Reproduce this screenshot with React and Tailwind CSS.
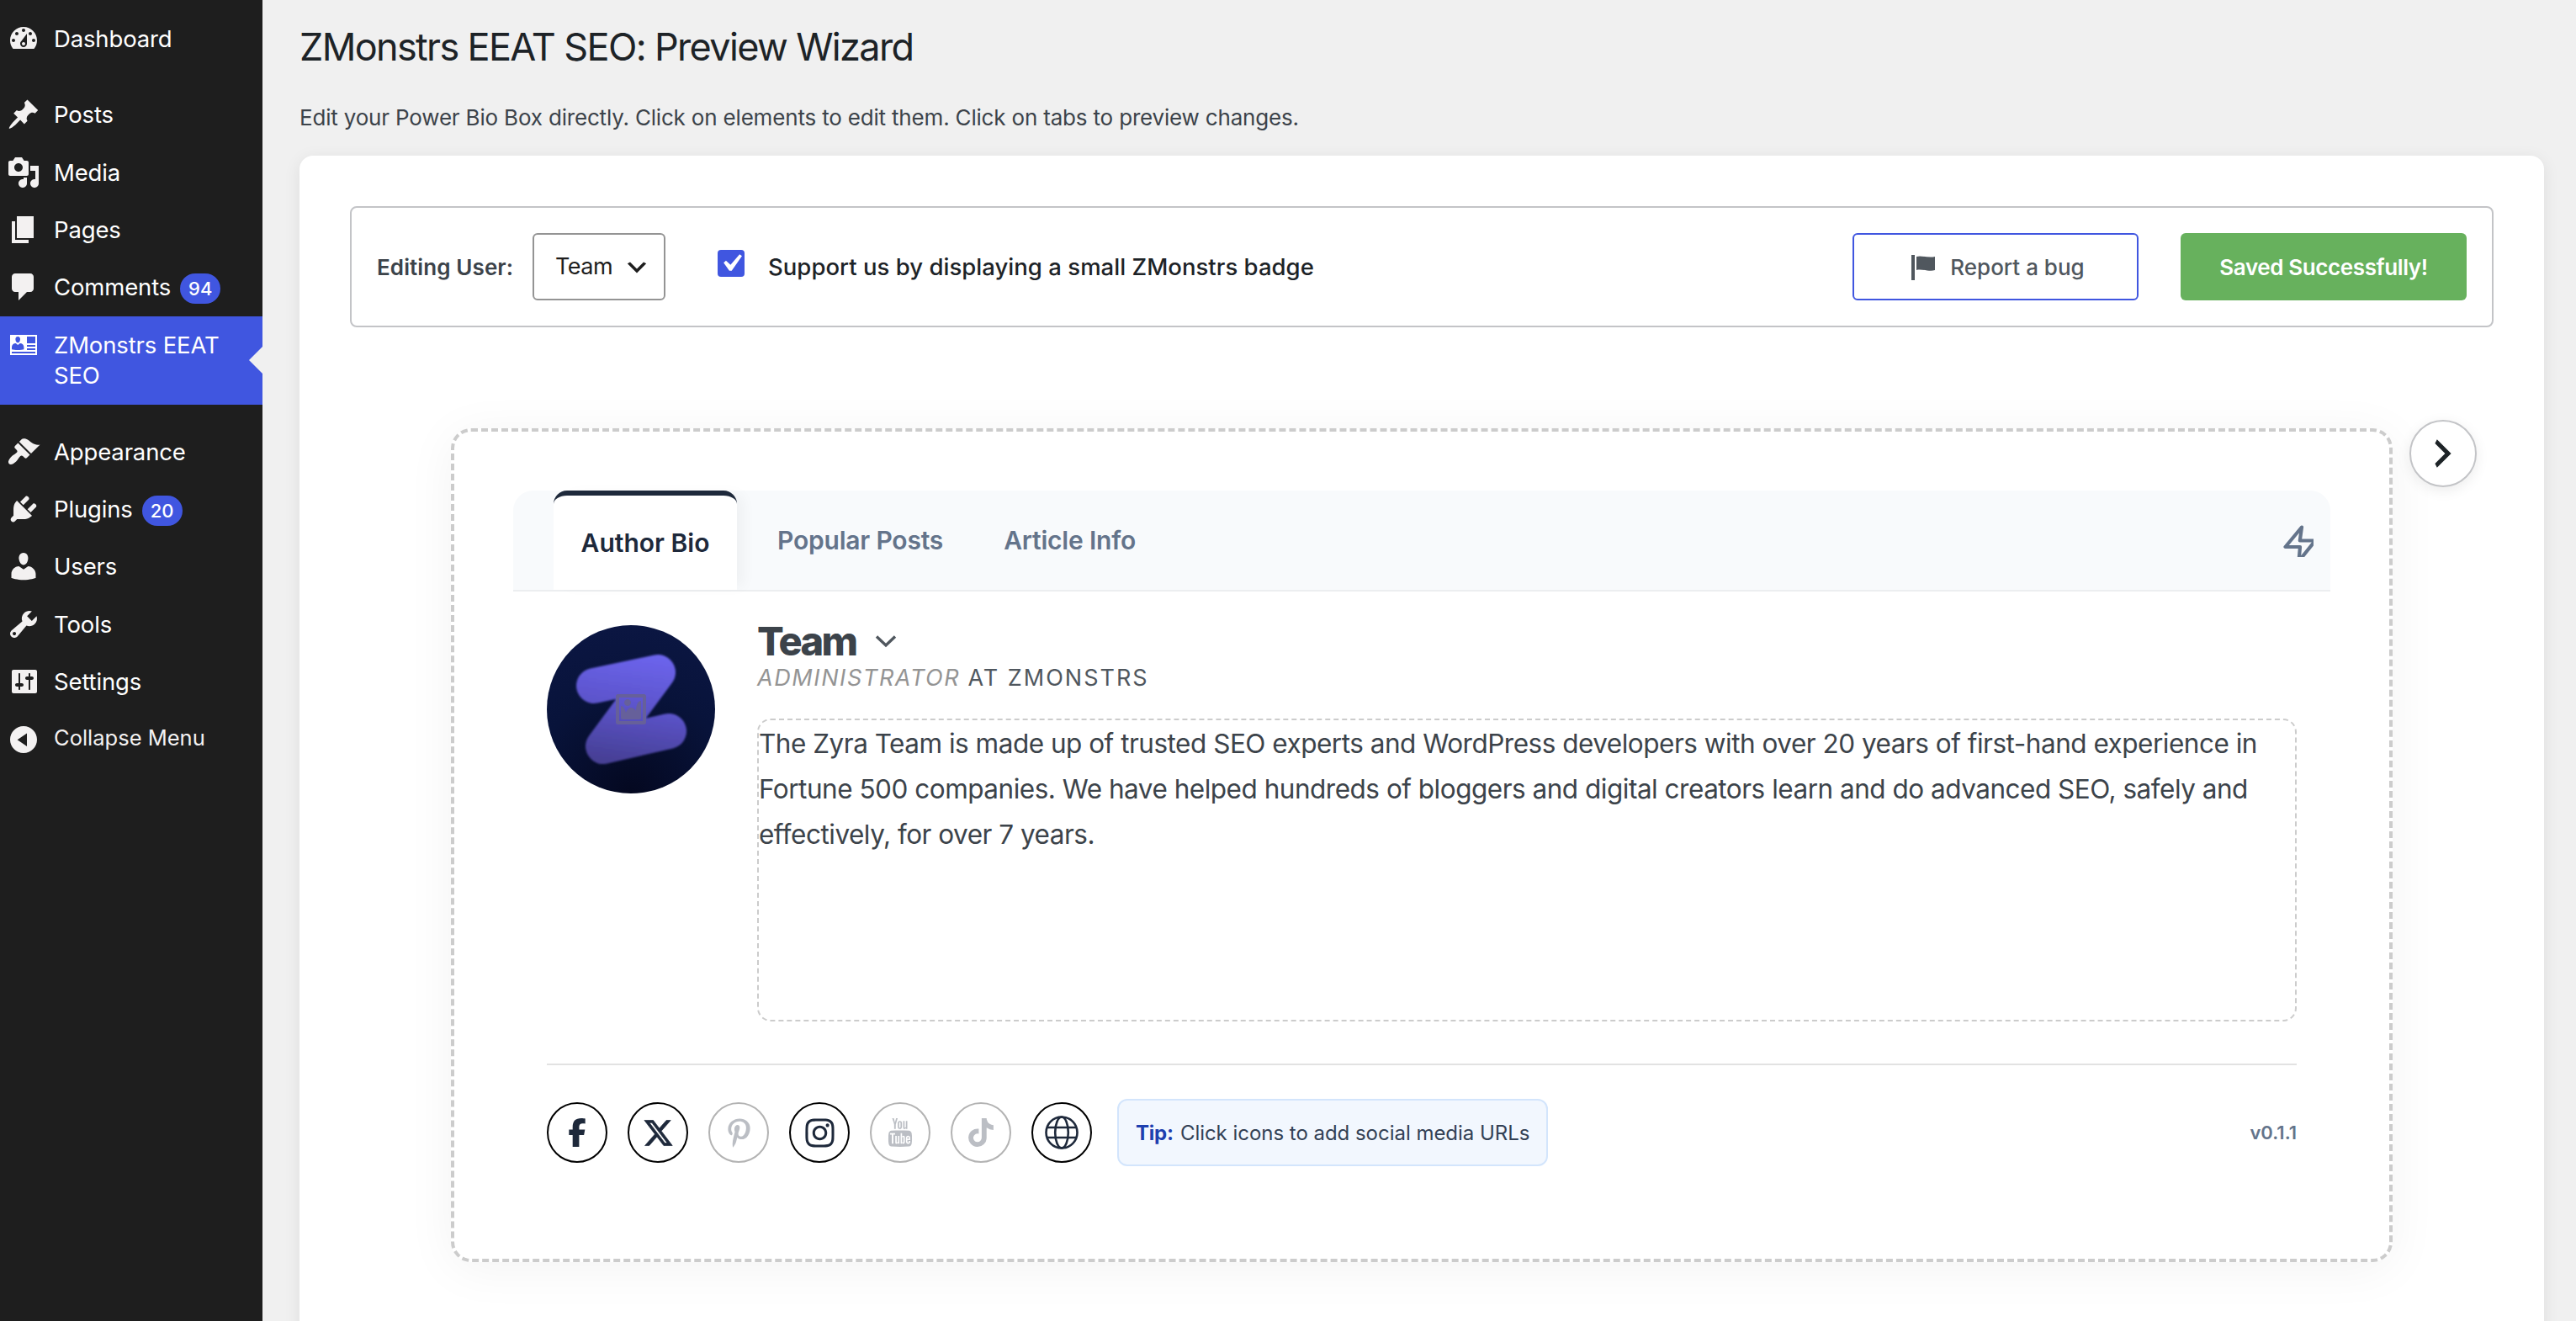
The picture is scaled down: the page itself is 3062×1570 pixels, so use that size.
import { FaFacebookF, FaXTwitter, FaPinterestP, FaInstagram, FaTiktok } from "react-icons/fa6";
import { TfiYoutube } from "react-icons/tfi";

const dashicons = {
    dashboard: "M3.76 16h12.48c1.1-1.37 1.76-3.11 1.76-5 0-4.42-3.58-8-8-8s-8 3.58-8 8c0 1.89.66 3.63 1.76 5zM10 4c.55 0 1 .45 1 1s-.45 1-1 1-1-.45-1-1 .45-1 1-1zM6 6c.55 0 1 .45 1 1s-.45 1-1 1-1-.45-1-1 .45-1 1-1zm8 0c.55 0 1 .45 1 1s-.45 1-1 1-1-.45-1-1 .45-1 1-1zm-5.37 5.55L12 7v6c0 1.1-.9 2-2 2s-2-.9-2-2c0-.57.24-1.08.63-1.45zM4 10c.55 0 1 .45 1 1s-.45 1-1 1-1-.45-1-1 .45-1 1-1zm12 0c.55 0 1 .45 1 1s-.45 1-1 1-1-.45-1-1 .45-1 1-1zm-5 3c0-.55-.45-1-1-1s-1 .45-1 1 .45 1 1 1 1-.45 1-1z",
    post: "M10.44 3.02l1.82-1.82 6.36 6.35-1.83 1.82c-1.05-.68-2.48-.57-3.41.36l-.75.75c-.92.93-1.04 2.35-.35 3.41l-1.83 1.82-2.41-2.41-2.8 2.79c-.42.42-3.38 2.71-3.8 2.29s1.86-3.39 2.28-3.81l2.79-2.79L4.1 9.36l1.83-1.82c1.05.69 2.48.57 3.4-.36l.75-.75c.93-.92 1.05-2.35.36-3.41z",
    media: "M13 11V4c0-.55-.45-1-1-1h-1.67L9 1H5L3.67 3H2c-.55 0-1 .45-1 1v7c0 .55.45 1 1 1h10c.55 0 1-.45 1-1zM7 4.5c1.38 0 2.5 1.12 2.5 2.5S8.38 9.5 7 9.5 4.5 8.38 4.5 7 5.62 4.5 7 4.5zM14 6h5v10.5c0 1.38-1.12 2.5-2.5 2.5S14 17.88 14 16.5s1.12-2.5 2.5-2.5c.17 0 .34.02.5.05V9h-3V6zm-4 8.05V13h2v3.5c0 1.38-1.12 2.5-2.5 2.5S7 17.88 7 16.5 8.12 14 9.5 14c.17 0 .34.02.5.05z",
    page: "M6 15V2h10v13H6zm-1 1h8v2H3V5h2v11z",
    comments: "M5 2h9c1.1 0 2 .9 2 2v7c0 1.1-.9 2-2 2h-2l-5 5v-5H5c-1.1 0-2-.9-2-2V4c0-1.1.9-2 2-2z",
    id: "M2 4h16v12H2V4zm10 1v4h5V5h-5zm0 5v1h5v-1h-5zm0 2v1h5v-1h-5zM3 14v1h14v-1H3zM6.6 5C5.6 5 5.1 5.8 5.2 6.8c.1 1 .6 1.9 1.4 1.9s1.3-.9 1.4-1.9C8.1 5.8 7.6 5 6.6 5zM5.4 9C4 9 3 10 3 11.2V12.600c1.2.5 6 .5 7.200 0V11.200C10.200 10 9.200 9 7.900 9L6.600 10z",
    appearance: "M14.48 11.06L7.41 3.99l1.5-1.5c.5-.56 2.3-.47 3.51.32 1.21.8 1.43 1.28 2.91 2.1 1.18.64 2.45 1.26 4.45.85zm-.71.71L6.7 4.7 4.93 6.47c-.39.39-.39 1.02 0 1.41l1.06 1.06c.39.39.39 1.03 0 1.42-.6.6-1.43 1.11-2.21 1.69-.35.26-.7.53-1.01.84C1.43 14.23.4 16.08 1.4 17.07c.99 1 2.84-.03 4.18-1.36.31-.31.58-.66.85-1.02.57-.78 1.08-1.61 1.69-2.21.39-.39 1.02-.39 1.41 0l1.06 1.06c.39.39 1.02.39 1.41 0z",
    plugins: "M13.11 4.36L9.87 7.6 8 5.73l3.24-3.24c.35-.34 1.05-.2 1.56.32.52.51.66 1.21.31 1.55zm-8 1.77l.91-1.12 9.01 9.01-1.19.84c-.71.71-2.63 1.16-3.82 1.16H6.14L4.9 17.26c-.59.59-1.54.59-2.12 0-.59-.58-.59-1.53 0-2.12l1.24-1.24v-3.88c0-1.13.4-3.19 1.09-3.89zm7.26 3.97l3.24-3.24c.34-.35 1.04-.21 1.55.31.52.51.66 1.21.31 1.55l-3.24 3.25z",
    users: "M10 9.25c-2.27 0-2.73-3.44-2.73-3.44C7 4.02 7.82 2 9.97 2c2.16 0 2.98 2.02 2.71 3.81 0 0-.41 3.44-2.68 3.44zm0 2.57L12.72 10c2.39 0 4.52 2.33 4.52 4.53v2.49s-3.65 1.13-7.24 1.13c-3.65 0-7.24-1.13-7.24-1.13v-2.49c0-2.25 1.94-4.48 4.47-4.48z",
    tools: "M16.68 9.77c-1.34 1.34-3.3 1.67-4.95.99l-5.41 6.52c-.99.99-2.59.99-3.58 0s-.99-2.59 0-3.57l6.52-5.42c-.68-1.65-.35-3.61.99-4.95 1.28-1.28 3.12-1.62 4.72-1.06l-2.89 2.89 2.82 2.82 2.86-2.87c.53 1.58.18 3.39-1.08 4.65zM3.81 16.21c.4.39 1.04.39 1.43 0 .4-.4.4-1.04 0-1.43-.39-.4-1.03-.4-1.43 0-.39.39-.39 1.03 0 1.43z",
    settings: "M18 16V4c0-.55-.45-1-1-1H4c-.55 0-1 .45-1 1v12c0 .55.45 1 1 1h13c.55 0 1-.45 1-1zM8 11h1c.55 0 1 .45 1 1s-.45 1-1 1H8v1.5c0 .28-.22.5-.5.5s-.5-.22-.5-.5V13H6c-.55 0-1-.45-1-1s.45-1 1-1h1V5.5c0-.28.22-.5.5-.5s.5.22.5.5V11zm5-2h-1c-.55 0-1-.45-1-1s.45-1 1-1h1V5.5c0-.28.22-.5.5-.5s.5.22.5.5V7h1c.55 0 1 .45 1 1s-.45 1-1 1h-1v5.5c0 .28-.22.5-.5.5s-.5-.22-.5-.5V9z",
    collapse: "M10 2c4.42 0 8 3.58 8 8s-3.58 8-8 8-8-3.58-8-8 3.58-8 8-8zm2 12V6.200l-5.700 3.900z",
    flag: "M5 18V3H3v15h2zm1-6V4c3-1 7 1 11 0v8c-3 1.27-8-1-11 0z",
    image: "M2.25 1h15.5c.69 0 1.25.56 1.25 1.25v15.5c0 .69-.56 1.25-1.25 1.25H2.25C1.56 19 1 18.44 1 17.75V2.25C1 1.56 1.56 1 2.25 1zM17 17V3H3v14h14zM10 6c0-1.1-.9-2-2-2s-2 .9-2 2 .9 2 2 2 2-.9 2-2zm3 5s0-6 3-6v10c0 .55-.45 1-1 1H5c-.55 0-1-.45-1-1V8c2 0 3 4 3 4s1-3 3-3 3 2 3 2z",
    arrowRight: "M6 15l5-5-5-5 1-2 7 7-7 7z",
    arrowDown: "M5 6l5 5 5-5 2 1-7 7-7-7z",
    check: "M14.83 4.89l1.34.94-5.81 8.38H9.02L5.78 9.67l1.34-1.25 2.57 2.4z",
};

const menu = [
    { icon: "dashboard", label: "Dashboard", gap: true },
    { icon: "post", label: "Posts" },
    { icon: "media", label: "Media" },
    { icon: "page", label: "Pages" },
    { icon: "comments", label: "Comments", count: 94 },
    { icon: "id", label: "ZMonstrs EEAT SEO", active: true, gap: true },
    { icon: "appearance", label: "Appearance" },
    { icon: "plugins", label: "Plugins", count: 20 },
    { icon: "users", label: "Users" },
    { icon: "tools", label: "Tools" },
    { icon: "settings", label: "Settings" },
];

const socials = [
    { name: "Facebook", icon: <FaFacebookF size={34} />, on: true },
    { name: "X", icon: <FaXTwitter size={37} stroke="currentColor" strokeWidth="10" />, on: true },
    { name: "Pinterest", icon: <FaPinterestP size={35} /> },
    { name: "Instagram", icon: <FaInstagram size={39} />, on: true },
    { name: "YouTube", icon: <TfiYoutube size={34} /> },
    { name: "TikTok", icon: <FaTiktok size={34} /> },
    { name: "Website", icon: <Globe />, on: true },
];

function Dashicon({ name, className = "size-10" }) {
    return (
        <svg viewBox="0 0 20 20" className={`shrink-0 ${className}`} fill="currentColor" fillRule="evenodd">
            <path d={dashicons[name]} />
        </svg>
    );
}

function Globe() {
    return (
        <svg width="40" height="40" viewBox="0 0 40 40" fill="none" stroke="currentColor" strokeWidth="2.600">
            <circle cx="20" cy="20" r="18.500" />
            <ellipse cx="20" cy="20" rx="7.800" ry="18.500" />
            <path d="M2.500 14H37.500M2.500 26H37.500" />
        </svg>
    );
}

function MenuItem({ item }) {
    return (
        <li className={item.gap ? "mb-[22px]" : ""}>
            <a className={`relative flex pl-2 pt-[14px] ${item.active ? "h-[104.8px] bg-[#4056e0]" : "h-[68.4px]"}`}>
                <Dashicon name={item.icon} className={item.active ? "size-10 text-white" : "size-10 text-[#f3f1f1]"} />
                <div className="ml-4 mt-[2px] flex w-[220px] items-start text-[27.5px] leading-[36.4px] tracking-[-0.15px] text-white">
                    {item.label}
                    {item.count && (
                        <span className="ml-[11px] mt-[2px] flex h-9 items-center rounded-full bg-[#4056e0] px-[10px] text-[22px] font-medium tracking-normal">
                            {item.count}
                        </span>
                    )}
                </div>
                {item.active && (
                    <span className="absolute right-0 top-9 border-y-[16px] border-r-[16px] border-y-transparent border-r-[#f0f0f0]"></span>
                )}
            </a>
        </li>
    );
}

function Sidebar() {
    return (
        <nav className="w-[312px] shrink-0 bg-[#1e1e1e] pt-[11.8px]">
            <ul>
                {menu.map((item) => <MenuItem key={item.label} item={item} />)}
            </ul>
            <button className="flex h-[68px] items-center gap-4 pl-2 text-[#f3f1f1]">
                <Dashicon name="collapse" />
                <span className="-mt-[3px] text-[25.5px]">Collapse Menu</span>
            </button>
        </nav>
    );
}

function Toolbar() {
    return (
        <div className="flex h-36 items-center rounded-lg border-2 border-[#c3c4c7] px-[30px]">
            <span className="w-[185px] pt-[1px] text-[26px] font-semibold tracking-[0.1px] text-[#3c434a]">Editing User:</span>
            <button className="flex h-20 w-[158px] items-center justify-between rounded-md border-2 border-[#949494] pl-[25px] pr-4 pt-[1px] text-[27px] tracking-[-0.5px] text-[#1e1e1e]">
                Team
                <Dashicon name="arrowDown" className="size-8" />
            </button>
            <label className="ml-[62px] flex items-center">
                <span className="-mt-2 flex size-8 items-center justify-center rounded-sm bg-[#4056e0] text-white">
                    <Dashicon name="check" className="size-[42px]" />
                </span>
                <span className="ml-7 pt-[1px] text-[27.5px] font-medium tracking-[0.03px] text-[#1d2327]">
                    Support us by displaying a small ZMonstrs badge
                </span>
            </label>
            <button className="ml-auto flex h-20 w-[340px] items-center justify-center rounded-md border-2 border-[#4056e0] text-[26px] font-medium text-[#50575e]">
                <Dashicon name="flag" className="mr-3 size-10" />
                Report a bug
            </button>
            <button className="ml-[50px] h-20 w-[340px] rounded-md bg-[#67b15d] text-[26px] font-semibold tracking-[-0.4px] text-white">
                Saved Successfully!
            </button>
        </div>
    );
}

function Tabs() {
    return (
        <div className="flex h-[120px] rounded-t-3xl border-b-2 border-[#eceef0] bg-[#f8fafc] pl-12 pr-5 text-[30px] font-semibold text-[#64748b]">
            <button className="w-[218px] rounded-t-[16px] border-t-[6px] border-[#1e293b] bg-white text-[#1e293b] shadow-[12px_0_16px_-4px_rgba(0,0,0,0.04)]">
                Author Bio
            </button>
            <button className="ml-[48px] tracking-[-0.2px]">Popular Posts</button>
            <button className="ml-[72px] tracking-[-0.2px]">Article Info</button>
            <svg className="ml-auto mt-[39px]" width="40" height="40" viewBox="0 0 40 40" fill="none" stroke="currentColor" strokeWidth="4.200" strokeLinejoin="round">
                <path d="M26 4.500L6.500 28H24L22.500 45L42 20.500H23.800z" />
            </svg>
        </div>
    );
}

function Avatar() {
    return (
        <svg viewBox="0 0 200 200" className="size-[200px] shrink-0 rounded-full">
            <defs>
                <radialGradient id="night" cx="0.5" cy="1" r="1">
                    <stop offset="0" stopColor="#040820" />
                    <stop offset="0.6" stopColor="#08133a" />
                    <stop offset="1" stopColor="#0b1642" />
                </radialGradient>
                <linearGradient id="zed" gradientUnits="userSpaceOnUse" x1="110" y1="34" x2="90" y2="165">
                    <stop offset="0" stopColor="#6c64ec" />
                    <stop offset="0.45" stopColor="#5d55cd" />
                    <stop offset="1" stopColor="#463f94" />
                </linearGradient>
                <filter id="soft" filterUnits="userSpaceOnUse" x="0" y="0" width="200" height="200">
                    <feGaussianBlur stdDeviation="0.8" />
                </filter>
            </defs>
            <rect width="200" height="200" fill="url(#night)" />
            <path d="M56 72L132 56L67 144L145 126" fill="none" stroke="url(#zed)" strokeWidth="42" strokeLinecap="round" strokeLinejoin="round" filter="url(#soft)" />
            <g transform="translate(80 80) scale(2)" fill="#66609a" fillRule="evenodd">
                <path d={dashicons.image} />
            </g>
        </svg>
    );
}

function AuthorBio() {
    return (
        <div className="px-10 pt-10">
            <div className="flex gap-[50px]">
                <Avatar />
                <div className="grow">
                    <h2 className="flex h-[38px] items-center text-[47px] font-extrabold tracking-[-2.7px] text-[#3c434a]">
                        Team
                        <svg width="26" height="16" viewBox="0 0 26 16" className="ml-[23px]" fill="none" stroke="#50575e" strokeWidth="3.400">
                            <path d="M2 2.500L13 13L24 2.500" />
                        </svg>
                    </h2>
                    <p className="mt-[7px] text-[27px] leading-[36px] tracking-[1.6px] text-[#50575e]">
                        <em className="text-[#949494]">ADMINISTRATOR</em> <span className="tracking-[2px]">AT ZMONSTRS</span>
                    </p>
                    <div className="mt-[30px] h-[360px] rounded-2xl border-2 border-dashed border-[#ccc] text-[31.5px] leading-[54px] tracking-[-0.49px] text-[#3c434a]">
                        <p className="pt-[1px]">
                            The Zyra Team is made up of trusted SEO experts and WordPress developers with over 20 years of first-hand experience in Fortune 500 companies. We have helped hundreds of bloggers and digital creators learn and do advanced SEO, safely and effectively, for over 7 years.
                        </p>
                    </div>
                </div>
            </div>
            <div className="mt-[50px] flex items-center border-t-2 border-[#e2e2e2] pt-10">
                <div className="flex gap-6">
                    {socials.map((s) => (
                        <a key={s.name} aria-label={s.name} className={`flex size-[72px] items-center justify-center rounded-full border-2 ${s.on ? "border-black text-[#1e293b]" : "border-[#b3b3b3] text-[#bbbec4]"}`}>
                            {s.icon}
                        </a>
                    ))}
                </div>
                <p className="ml-[30px] flex h-20 w-[512px] items-center rounded-xl border-2 border-[#d3e5fc] bg-[#f2f7fe] pl-5 pt-[1px] text-[24px] tracking-[-0.03px] text-[#334155]">
                    <b className="mr-2 tracking-[-0.2px] text-[#1e40af]">Tip:</b>Click icons to add social media URLs
                </p>
                <span className="ml-auto text-[22px] font-semibold text-[#64748b]">v0.1.1</span>
            </div>
        </div>
    );
}

export default function App() {
    return (
        <div className="flex h-[1570px] w-[3062px] overflow-hidden bg-[#f0f0f0] font-[Inter,sans-serif]">
            <Sidebar />
            <main className="flex grow flex-col pl-11 pr-[38px]">
                <h1 className="pt-7 text-[45px] leading-[56px] tracking-[-1.65px] text-[#1d2327]">ZMonstrs EEAT SEO: Preview Wizard</h1>
                <p className="mt-9 text-[26px] leading-10 tracking-[-0.18px] text-[#3c434a]">
                    Edit your Power Bio Box directly. Click on elements to edit them. Click on tabs to preview changes.
                </p>
                <section className="mt-[25px] h-[1500px] shrink-0 rounded-2xl bg-white px-[60px] pt-[60px] shadow-[0_4px_20px_rgba(0,0,0,0.08)]">
                    <Toolbar />
                    <div className="relative mx-auto mt-[120px] h-[991px] w-[2308px] rounded-3xl border-4 border-dashed border-[#ccc] bg-white px-[70px] pt-[70px] shadow-[0_8px_60px_rgba(0,0,0,0.05)]">
                        <Tabs />
                        <AuthorBio />
                        <button className="absolute -right-[104px] -top-[14px] flex size-20 items-center justify-center rounded-full border-2 border-[#c3c4c7] bg-white text-[#1d2327] shadow-[0_4px_16px_rgba(0,0,0,0.08)]">
                            <Dashicon name="arrowRight" className="size-12" />
                        </button>
                    </div>
                </section>
            </main>
        </div>
    );
}
